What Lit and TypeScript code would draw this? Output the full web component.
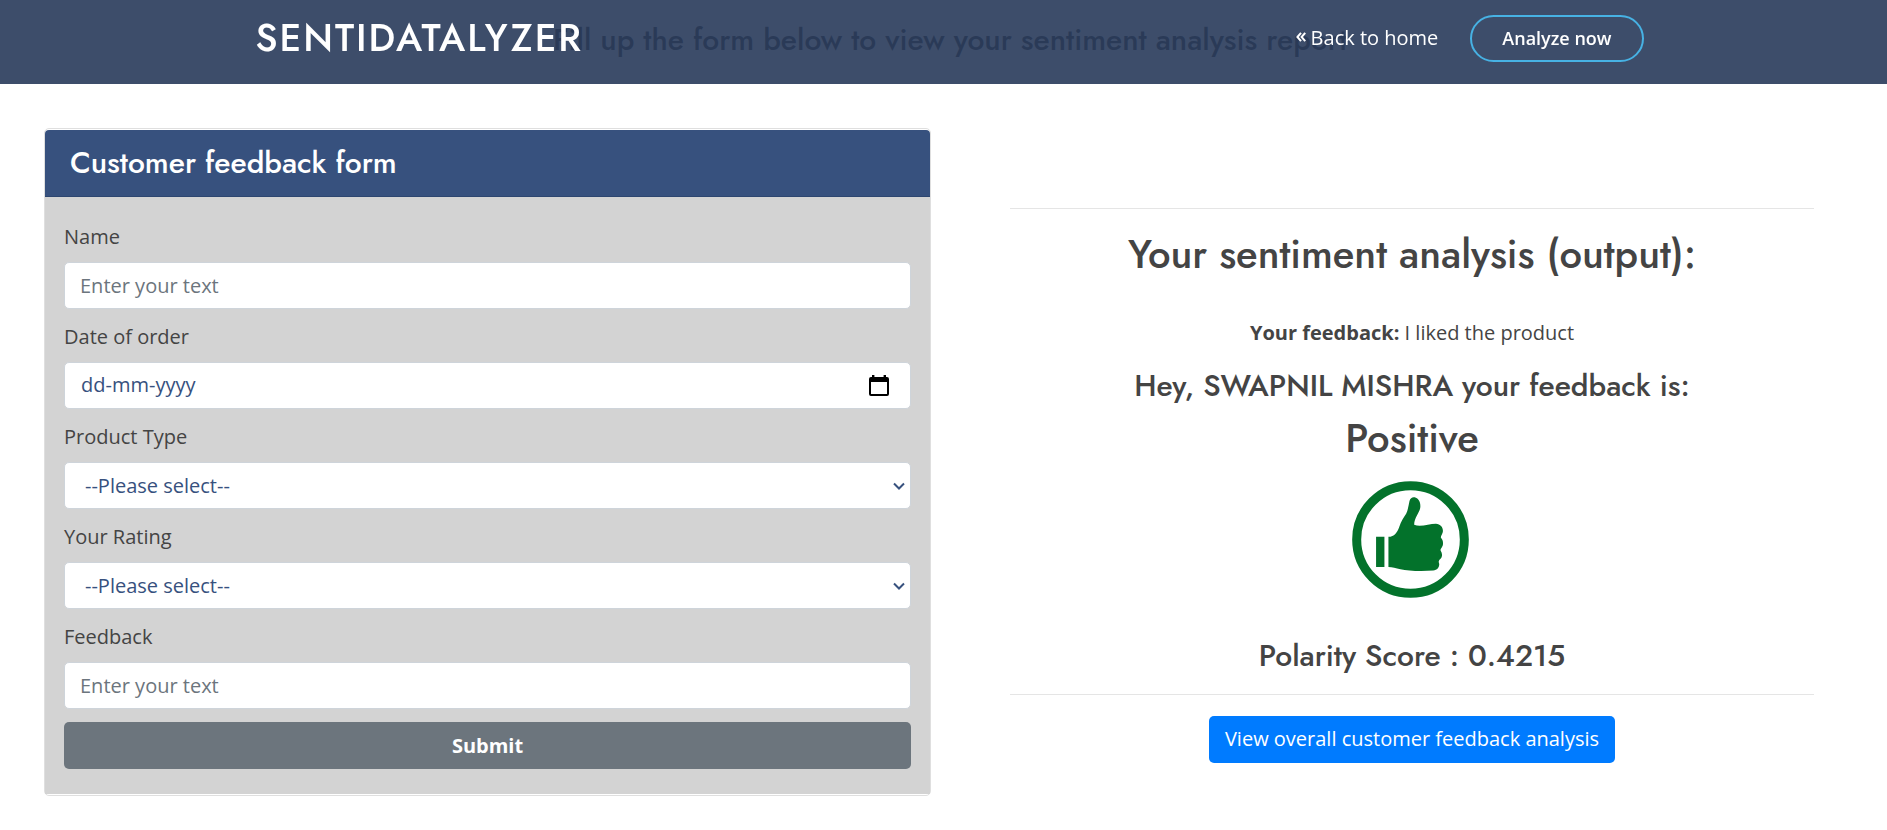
import { LitElement, html, css, svg } from "lit";
import { customElement } from "lit/decorators.js";

const chevron = svg`<path d="M1 1.5 6 6.5 11 1.5" fill="none" stroke="currentColor" stroke-width="2" />`;

@customElement("app-root")
export class AppRoot extends LitElement {
  static styles = css`
    :host {
      display: block;
      color: #444;
      background: #fff;
      font: 20px/30px "Open Sans", "Noto Sans", sans-serif;
    }
    * {
      box-sizing: border-box;
    }
    h1, h2, h3, p {
      margin: 0;
    }
    h1, h2, h3 {
      font-family: Jost, Lato, sans-serif;
      font-weight: 500;
    }
    a {
      color: inherit;
      text-decoration: none;
    }
    .header {
      position: fixed;
      inset: 0 0 auto 0;
      z-index: 10;
      height: 84px;
      padding-bottom: 7px;
      background: rgba(40, 58, 90, 0.9);
      color: #fff;
      display: flex;
      align-items: center;
      justify-content: center;
    }
    .bar {
      width: 100%;
      max-width: 1400px;
      padding-left: 12px;
      display: flex;
      align-items: center;
      justify-content: space-between;
    }
    .logo {
      font-size: 38px;
      line-height: 44px;
      padding-bottom: 2px;
      letter-spacing: 2px;
      text-transform: uppercase;
    }
    .nav {
      display: flex;
      align-items: center;
      gap: 32px;
    }
    .back {
      display: flex;
      align-items: center;
      gap: 5px;
      padding-bottom: 2px;
      font-size: 20px;
      font-weight: 500;
    }
    .back svg {
      margin-bottom: 2px;
    }
    .analyze {
      height: 47px;
      padding: 0 30px;
      border: 2px solid #47b2e4;
      border-radius: 24px;
      font-size: 18px;
      line-height: 43px;
      font-weight: 600;
    }
    .intro {
      padding: 22px 0 0 13px;
      text-align: center;
      font-size: 30px;
      line-height: 36px;
    }
    .columns {
      display: grid;
      grid-template-columns: 887fr 804fr;
      gap: 79px;
      align-items: start;
      padding: 70px 73px 34px 44px;
    }
    .card {
      border: 1px solid #dfdfdf;
      border-radius: 5px;
      padding: 1px 0;
    }
    .card-head {
      padding: 15px 25px;
      background: #37517e;
      border-bottom: 1px solid #2d4670;
      border-radius: 4px 4px 0 0;
      color: #fff;
    }
    .card-head h2 {
      font-size: 30px;
      line-height: 36px;
    }
    .form {
      display: grid;
      gap: 13px;
      padding: 25px 19px;
      background: #d3d3d3;
    }
    .field {
      display: grid;
      gap: 10px;
    }
    .control {
      display: grid;
      align-items: center;
    }
    .control > * {
      grid-area: 1 / 1;
    }
    .input {
      width: 100%;
      height: 47px;
      padding: 0 15px;
      border: 1px solid #ced4da;
      border-radius: 5px;
      background: #fff;
      color: #37517e;
      font: inherit;
      appearance: none;
    }
    .input::placeholder {
      color: #6c757d;
      opacity: 1;
    }
    .date {
      padding: 0 60px 2px 16px;
    }
    .date::placeholder {
      color: #37517e;
    }
    select.input {
      padding: 0 30px 0 20px;
    }
    .arrow {
      justify-self: end;
      margin-right: 6px;
      color: #37517e;
      pointer-events: none;
    }
    .picker {
      justify-self: end;
      margin-right: 22px;
      padding: 0;
      border: 0;
      background: none;
      display: flex;
      color: #000;
    }
    .submit {
      height: 47px;
      border: 0;
      border-radius: 5px;
      background: #6c757d;
      color: #fff;
      font: inherit;
      font-weight: 700;
    }
    .result {
      padding-top: 80px;
      display: flex;
      flex-direction: column;
      align-items: center;
      text-align: center;
    }
    .rule {
      width: 100%;
      margin: 0;
      border: 0;
      border-top: 1px solid #e5e5e5;
    }
    .title {
      margin: 21px 0 40px;
    }
    .title, .verdict {
      font-size: 40px;
      line-height: 48px;
    }
    .hey, .score {
      font-size: 30px;
      line-height: 36px;
    }
    .hey {
      margin: 20px 0 10px;
    }
    .thumb {
      margin: 19px 4px 40px 0;
    }
    .score {
      margin-bottom: 20px;
    }
    .overall {
      margin-top: 21px;
      padding: 0 16px 2px;
      border-radius: 5px;
      background: #007bff;
      color: #fff;
      line-height: 45px;
      font-weight: 500;
    }
  `;

  private select(id: string, label: string, options: string[]) {
    return html`<div class="field">
      <label for=${id}>${label}</label>
      <div class="control">
        <select class="input" id=${id}>
          <option value="">--Please select--</option>
          ${options.map((o) => html`<option>${o}</option>`)}
        </select>
        <svg class="arrow" width="12" height="8" viewBox="0 0 12 8">${chevron}</svg>
      </div>
    </div>`;
  }

  private text(id: string, label: string) {
    return html`<div class="field">
      <label for=${id}>${label}</label>
      <input class="input" id=${id} type="text" placeholder="Enter your text" />
    </div>`;
  }

  render() {
    return html`
      <header class="header">
        <div class="bar">
          <h1 class="logo"><a href="#">Sentidatalyzer</a></h1>
          <nav class="nav">
            <a class="back" href="#">
              <svg width="10" height="10" viewBox="0 0 10 10" fill="none" stroke="currentColor" stroke-width="2">
                <path d="M5 .8 1.4 5 5 9.2M9.2 .8 5.6 5 9.2 9.2" />
              </svg>
              Back to home
            </a>
            <a class="analyze" href="#">Analyze now</a>
          </nav>
        </div>
      </header>
      <main>
        <h2 class="intro">Fill up the form below to view your sentiment analysis report</h2>
        <div class="columns">
          <section class="card">
            <div class="card-head"><h2>Customer feedback form</h2></div>
            <form class="form" @submit=${(e: Event) => e.preventDefault()}>
              ${this.text("name", "Name")}
              <div class="field">
                <label for="date">Date of order</label>
                <div class="control">
                  <input class="input date" id="date" type="text" placeholder="dd-mm-yyyy" />
                  <button class="picker" type="button" aria-label="Open calendar">
                    <svg width="20" height="22" viewBox="0 0 20 22">
                      <path
                        fill="currentColor"
                        fill-rule="evenodd"
                        d="M3 0h2.4v2h9.2V0H17v2h1q2 0 2 2v15q0 2-2 2H2q-2 0-2-2V4q0-2 2-2h1zM2 7v12h16V7z"
                      />
                    </svg>
                  </button>
                </div>
              </div>
              ${this.select("product", "Product Type", ["Electronics", "Clothing", "Books"])}
              ${this.select("rating", "Your Rating", ["1", "2", "3", "4", "5"])}
              ${this.text("feedback", "Feedback")}
              <button class="submit" type="submit">Submit</button>
            </form>
          </section>
          <section class="result">
            <hr class="rule" />
            <h2 class="title">Your sentiment analysis (output):</h2>
            <p><strong>Your feedback:</strong> I liked the product</p>
            <h3 class="hey">Hey, SWAPNIL MISHRA your feedback is:</h3>
            <h2 class="verdict">Positive</h2>
            <svg class="thumb" width="117" height="117" viewBox="95 64 350 350" role="img" aria-label="Thumbs up">
              <circle cx="270" cy="239" r="161" fill="none" stroke="#03722b" stroke-width="27" />
              <path
                fill="#03722b"
                d="M167 231h25v90h-25zM204 231C222 230 230 218 236 202C242 184 250 172 257 162C263 150 264 136 267 124C270 113 278 111 286 114C297 118 301 132 299 145C296 160 281 175 281 195C300 203 325 192 346 192C362 193 370 207 366 219C364 225 360 230 361 234C368 241 369 254 365 260C362 266 359 268 360 272C366 281 366 291 359 297C353 303 354 307 356 312C356 323 350 330 338 332C300 335 262 333 240 328C226 324 216 321 204 321z"
              />
            </svg>
            <h3 class="score">Polarity Score : 0.4215</h3>
            <hr class="rule" />
            <a class="overall" href="#">View overall customer feedback analysis</a>
          </section>
        </div>
      </main>
    `;
  }
}
